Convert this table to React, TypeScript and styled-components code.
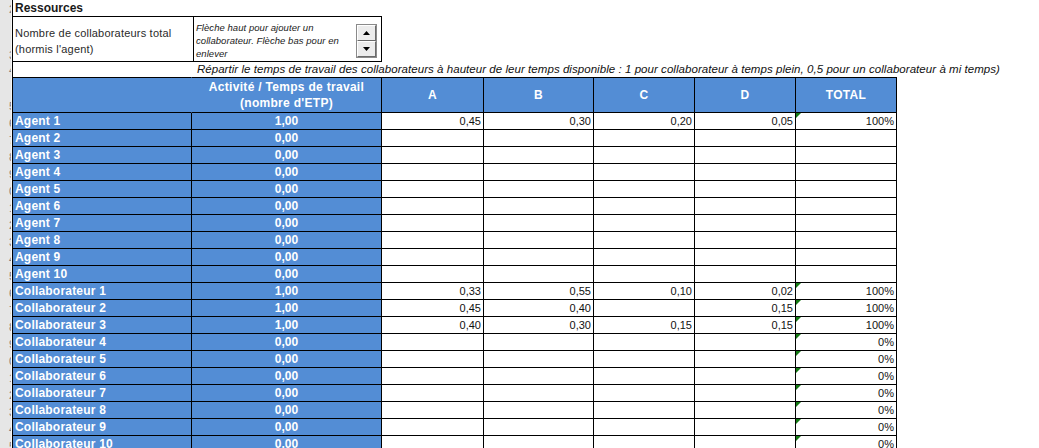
import React from "react";
import styled, { createGlobalStyle } from "styled-components";

const BLUE = "#538dd5";
const LINE = "#000";

const GlobalStyle = createGlobalStyle`
  html, body { margin: 0; padding: 0; background: #fff; }
  body {
    width: 1039px;
    height: 448px;
    overflow: hidden;
    font-family: "Liberation Sans", Arial, sans-serif;
  }
`;

const Sheet = styled.div`
  display: flex;
  flex-direction: column;
  width: 1039px;
`;

const Line = styled.div<{ $h: number }>`
  display: flex;
  height: ${(p) => p.$h}px;
`;

const RowHead = styled.div`
  width: 12px;
  flex: none;
  box-sizing: border-box;
  background: #e6e6e6;
  border-right: 1px solid #f6f6f6;
  overflow: hidden;
  display: flex;
  align-items: flex-end;
  justify-content: flex-end;
  font-size: 11px;
  line-height: 14px;
  color: #7a7a7a;
  span {
    margin-right: -4px;
  }
`;

const TitleCell = styled.div`
  flex: 1;
  border-left: 1px solid ${LINE};
  padding-left: 2px;
  font-size: 12px;
  font-weight: bold;
  color: #1a1a1a;
  display: flex;
  align-items: center;
`;

const Box = styled.div`
  display: flex;
  width: 370px;
  box-sizing: border-box;
  border: 1px solid ${LINE};
`;

const BoxLabel = styled.div`
  width: 178px;
  flex: none;
  border-right: 1px solid ${LINE};
  padding: 3px 0 0 2px;
  display: flex;
  align-items: center;
  font-size: 11px;
  letter-spacing: 0.2px;
  line-height: 16px;
  color: #2a2a2a;
`;

const BoxNote = styled.div`
  flex: 1;
  display: flex;
  align-items: flex-start;
  padding: 4px 0 0 2px;
`;

const NoteText = styled.div`
  font-size: 9.5px;
  font-style: italic;
  letter-spacing: 0.05px;
  line-height: 13px;
  color: #1a1a1a;
`;

const Spinner = styled.div`
  margin-left: auto;
  margin-right: 4px;
  align-self: center;
  display: flex;
  flex-direction: column;
  border: 1px solid #8a8a8a;
`;

const SpinButton = styled.div`
  width: 19px;
  height: 16px;
  box-sizing: border-box;
  background: #ececec;
  border-style: solid;
  border-width: 1px;
  border-color: #ffffff #6a6a6a #6a6a6a #ffffff;
  display: flex;
  align-items: center;
  justify-content: center;
`;

const Hint = styled.div`
  flex: none;
  width: 988px;
  box-sizing: border-box;
  border-left: 1px solid ${LINE};
  text-align: right;
  white-space: nowrap;
  font-size: 11.5px;
  font-style: italic;
  letter-spacing: 0.05px;
  line-height: 15px;
  color: #111;
`;

const Grid = styled.div`
  display: grid;
  grid-template-columns: 12px 180px 190px 102px 110px 101px 101px 101px;
  grid-template-rows: 36px repeat(20, 17px);
  font-size: 11px;
`;

const GridHead = styled(RowHead)``;

const HeadCell = styled.div<{ $first?: boolean }>`
  box-sizing: border-box;
  background: ${BLUE};
  color: #fff;
  font-weight: bold;
  font-size: 12px;
  letter-spacing: 0.3px;
  line-height: 16px;
  text-align: center;
  display: flex;
  align-items: center;
  justify-content: center;
  border-top: 1px solid ${LINE};
  border-bottom: 1px solid ${LINE};
  border-left: ${(p) => (p.$first ? `1px solid ${LINE}` : "none")};
  border-right: 1px solid ${(p) => (p.$first ? BLUE : LINE)};
`;

const LabelCell = styled.div`
  box-sizing: border-box;
  background: ${BLUE};
  color: #fff;
  font-weight: bold;
  font-size: 12px;
  letter-spacing: 0.2px;
  padding-left: 2px;
  display: flex;
  align-items: center;
  white-space: nowrap;
  border-left: 1px solid ${LINE};
  border-right: 1px solid ${LINE};
  border-bottom: 1px solid ${LINE};
`;

const EtpCell = styled.div`
  box-sizing: border-box;
  background: ${BLUE};
  color: #fff;
  font-weight: bold;
  font-size: 12px;
  display: flex;
  align-items: center;
  justify-content: center;
  border-right: 1px solid ${LINE};
  border-bottom: 1px solid ${LINE};
`;

const ValueCell = styled.div<{ $flag?: boolean }>`
  position: relative;
  box-sizing: border-box;
  background: #fff;
  color: #111;
  display: flex;
  align-items: center;
  justify-content: flex-end;
  padding-right: 2px;
  border-right: 1px solid ${LINE};
  border-bottom: 1px solid ${LINE};
  &::before {
    content: "";
    display: ${(p) => (p.$flag ? "block" : "none")};
    position: absolute;
    left: 0;
    top: 0;
    border-style: solid;
    border-width: 5px 5px 0 0;
    border-color: #137a13 transparent transparent transparent;
  }
`;

type Row = {
  name: string;
  etp: string;
  vals: string[];
  total: string;
  flag: boolean;
};

const rows: Row[] = [
  { name: "Agent 1", etp: "1,00", vals: ["0,45", "0,30", "0,20", "0,05"], total: "100%", flag: true },
  ...Array.from({ length: 9 }, (_, i) => ({
    name: `Agent ${i + 2}`,
    etp: "0,00",
    vals: ["", "", "", ""],
    total: "",
    flag: false,
  })),
  { name: "Collaborateur 1", etp: "1,00", vals: ["0,33", "0,55", "0,10", "0,02"], total: "100%", flag: true },
  { name: "Collaborateur 2", etp: "1,00", vals: ["0,45", "0,40", "", "0,15"], total: "100%", flag: true },
  { name: "Collaborateur 3", etp: "1,00", vals: ["0,40", "0,30", "0,15", "0,15"], total: "100%", flag: true },
  ...Array.from({ length: 7 }, (_, i) => ({
    name: `Collaborateur ${i + 4}`,
    etp: "0,00",
    vals: ["", "", "", ""],
    total: "0%",
    flag: true,
  })),
];

const Arrow = ({ up }: { up?: boolean }) => (
  <svg width="7" height="4" viewBox="0 0 7 4">
    <polygon points={up ? "0,4 7,4 3.5,0" : "0,0 7,0 3.5,4"} fill="#000" />
  </svg>
);

export default function App() {
  return (
    <Sheet>
      <GlobalStyle />
      <Line $h={16}>
        <RowHead>
          <span>2</span>
        </RowHead>
        <TitleCell>Ressources</TitleCell>
      </Line>
      <Line $h={46}>
        <RowHead>
          <span>3</span>
        </RowHead>
        <Box>
          <BoxLabel>
            Nombre de collaborateurs total
            <br />
            (hormis l'agent)
          </BoxLabel>
          <BoxNote>
            <NoteText>
              Flèche haut pour ajouter un
              <br />
              collaborateur. Flèche bas pour en
              <br />
              enlever
            </NoteText>
            <Spinner>
              <SpinButton>
                <Arrow up />
              </SpinButton>
              <SpinButton>
                <Arrow />
              </SpinButton>
            </Spinner>
          </BoxNote>
        </Box>
      </Line>
      <Line $h={15}>
        <RowHead>
          <span>4</span>
        </RowHead>
        <Hint>
          Répartir le temps de travail des collaborateurs à hauteur de leur temps disponible : 1 pour collaborateur à temps plein, 0,5 pour un collaborateur à mi temps)
        </Hint>
      </Line>
      <Grid>
        <GridHead>
          <span>5</span>
        </GridHead>
        <HeadCell $first />
        <HeadCell>
          Activité / Temps de travail
          <br />
          (nombre d'ETP)
        </HeadCell>
        <HeadCell>A</HeadCell>
        <HeadCell>B</HeadCell>
        <HeadCell>C</HeadCell>
        <HeadCell>D</HeadCell>
        <HeadCell>TOTAL</HeadCell>
        {rows.map((r, i) => (
          <React.Fragment key={r.name}>
            <GridHead>
              <span>{(16 + i) % 10}</span>
            </GridHead>
            <LabelCell>{r.name}</LabelCell>
            <EtpCell>{r.etp}</EtpCell>
            {r.vals.map((v, j) => (
              <ValueCell key={j}>{v}</ValueCell>
            ))}
            <ValueCell $flag={r.flag}>{r.total}</ValueCell>
          </React.Fragment>
        ))}
      </Grid>
    </Sheet>
  );
}
